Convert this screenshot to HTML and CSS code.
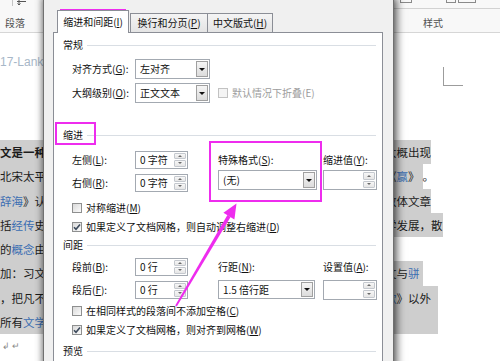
FILE: index.html
```html
<!DOCTYPE html>
<html lang="zh-CN">
<head>
<meta charset="utf-8">
<title>段落</title>
<link rel="stylesheet" href="styles.css">
</head>
<body>
<div class="screen">
  <div class="doc">
    <div class="doc-left">
      <div class="ribbon">
        <div class="rb-top">
          <span class="rb-sep"></span>
          <svg class="rb-icon" width="11" height="6" viewBox="0 0 11 6"><path d="M1 1.5H10M3 0V5M1.5 3.5L3 5L4.5 3.5" fill="none" stroke="#555" stroke-width="1"/></svg>
        </div>
        <div class="rb-label">段落</div>
      </div>
      <div class="page-left">
        <div class="lank">17-Lank</div>
        <div class="hl-block">
          <div class="line bold">文是一种</div>
          <div class="line">北宋太平</div>
          <div class="line"><span class="link">辞海</span>》认</div>
          <div class="line">括<span class="link">经传</span>史</div>
          <div class="line">的<span class="link">概念</span>由</div>
          <div class="line">加：习文</div>
          <div class="line">，把凡不</div>
          <div class="line">所有<span class="link">文学</span></div>
        </div>
        <div class="line para">↲ ↵</div>
      </div>
    </div>
    <div class="doc-mid"></div>
    <div class="doc-right">
      <div class="ribbon">
        <div class="rb-top rb-top-right">
          <span class="frag frag-a"></span>
          <span class="frag frag-b"></span>
          <span class="frag frag-c"></span>
        </div>
        <div class="rb-label rb-label-right">样式</div>
      </div>
      <div class="page-right">
        <div class="mark"></div>
        <div class="rrows">
          <div class="rline"><span class="hl">大概出现</span></div>
          <div class="rline"><span class="hl hl-p3">《<span class="link">赢</span>》</span><span>。</span></div>
          <div class="rline"><span class="hl">散体文章</span></div>
          <div class="rline"><span class="hl">学发展，散</span></div>
          <div class="rline"></div>
          <div class="rline"><span class="hl hl-p3">文与<span class="link">骈</span></span></div>
          <div class="rline"><span class="hl hl-p7"><span class="link">歌</span>》以外</span></div>
          <div class="rline"><span class="hl hl-empty"></span></div>
        </div>
      </div>
    </div>
  </div>

  <div class="dialog">
    <div class="tabs">
      <div class="tab active">缩进和间距(<u>I</u>)</div>
      <div class="tab second">换行和分页(<u>P</u>)</div>
      <div class="tab third">中文版式(<u>H</u>)</div>
    </div>
    <div class="panel">
      <div class="heading"><span>常规</span><span class="rule"></span></div>
      <div class="grid grid-general">
        <span class="lbl">对齐方式(<u>G</u>):</span>
        <div class="select sel-short"><span class="val">左对齐</span><span class="dd"><i></i></span></div>
        <span class="span2"></span>
        <span class="lbl">大纲级别(<u>O</u>):</span>
        <div class="select sel-short"><span class="val">正文文本</span><span class="dd"><i></i></span></div>
        <span class="check-line disabled span2"><span class="cb"></span>默认情况下折叠(E)</span>
      </div>

      <div class="heading heading-indent"><span>缩进</span><span class="rule"></span></div>
      <div class="grid grid-indent">
        <span class="lbl">左侧(<u>L</u>):</span>
        <div class="spin"><span class="val">0 字符</span><span class="spbtns"><b class="up"></b><b class="down"></b></span></div>
        <span class="lbl">特殊格式(<u>S</u>):</span>
        <span class="lbl">缩进值(<u>Y</u>):</span>
        <span class="lbl">右侧(<u>R</u>):</span>
        <div class="spin"><span class="val">0 字符</span><span class="spbtns"><b class="up"></b><b class="down"></b></span></div>
        <div class="select sel-wide raise"><span class="val">(无)</span><span class="dd"><i></i></span></div>
        <div class="spin spin-empty raise"><span class="val"></span><span class="spbtns"><b class="up"></b><b class="down"></b></span></div>
      </div>
      <div class="check-line row19"><span class="cb"></span>对称缩进(<u>M</u>)</div>
      <div class="check-line row19"><span class="cb checked"><svg width="8" height="8" viewBox="0 0 8 8"><path d="M1 4.2L3 6.3L7 1.5" fill="none" stroke="#3c4a5c" stroke-width="1.6"/></svg></span>如果定义了文档网格，则自动调整右缩进(<u>D</u>)</div>

      <div class="heading heading-spacing"><span>间距</span><span class="rule"></span></div>
      <div class="grid grid-spacing">
        <span class="lbl">段前(<u>B</u>):</span>
        <div class="spin"><span class="val">0 行</span><span class="spbtns"><b class="up"></b><b class="down"></b></span></div>
        <span class="lbl">行距(<u>N</u>):</span>
        <span class="lbl">设置值(<u>A</u>):</span>
        <span class="lbl">段后(<u>F</u>):</span>
        <div class="spin"><span class="val">0 行</span><span class="spbtns"><b class="up"></b><b class="down"></b></span></div>
        <div class="select sel-mid"><span class="val">1.5 倍行距</span><span class="dd"><i></i></span></div>
        <div class="spin spin-empty"><span class="val"></span><span class="spbtns"><b class="up"></b><b class="down"></b></span></div>
      </div>
      <div class="check-line row19"><span class="cb"></span>在相同样式的段落间不添加空格(<u>C</u>)</div>
      <div class="check-line row19"><span class="cb checked"><svg width="8" height="8" viewBox="0 0 8 8"><path d="M1 4.2L3 6.3L7 1.5" fill="none" stroke="#3c4a5c" stroke-width="1.6"/></svg></span>如果定义了文档网格，则对齐到网格(<u>W</u>)</div>

      <div class="heading heading-preview"><span>预览</span><span class="rule"></span></div>
    </div>
  </div>

  <div class="hbox hbox-tab"></div>
  <div class="hbox hbox-indent"></div>
  <div class="hbox hbox-special"></div>
  <svg class="arrow" width="500" height="361" viewBox="0 0 500 361">
    <polygon points="175.2,305.6 176.8,306.4 230.6,216.9 227.4,215.1" fill="#ee2cee"/>
    <polygon points="236.5,203.5 234.4,219.5 223.4,212.8" fill="#ee2cee"/>
  </svg>
</div>
</body>
</html>
```

FILE: styles.css
```css
* { box-sizing: border-box; }
html, body { margin: 0; padding: 0; }
body {
  width: 500px;
  height: 361px;
  overflow: hidden;
  background: #fff;
  font-family: "Noto Sans CJK SC", "Noto Sans", sans-serif;
}
u { text-decoration: underline; text-underline-offset: 1px; }

.screen {
  position: relative;
  width: 500px;
  height: 361px;
  overflow: hidden;
  background: #fff;
}

/* ---------- background document ---------- */
.doc { display: flex; height: 361px; }
.doc-left { width: 43px; flex: none; display: flex; flex-direction: column; }
.doc-mid { flex: 1; }
.doc-right { width: 115px; flex: none; display: flex; flex-direction: column; }

.ribbon {
  height: 33px;
  flex: none;
  background: #f8f8f8;
  border-bottom: 1px solid #d6d6d6;
}
.rb-top { height: 8px; display: flex; align-items: flex-start; }
.rb-sep { width: 1px; height: 6px; margin-left: 12px; background: #c4c4c4; }
.rb-icon { margin-left: 3px; }
.rb-label {
  margin-top: 8px;
  padding-left: 5px;
  font-size: 10px;
  line-height: 14px;
  color: #505050;
}
.rb-top-right {
  height: 9px;
  border-bottom: 1px solid #d2d2d2;
  align-items: flex-start;
}
.frag {
  height: 3px;
  border-bottom: 1px solid #8a8a8a;
  border-left: 1px solid #8a8a8a;
  border-right: 1px solid #8a8a8a;
}
.frag-a { width: 12px; margin-left: 15px; }
.frag-b { width: 10px; margin-left: 34px; }
.frag-c { width: 18px; margin-left: 2px; }
.rb-label-right { padding-left: 38px; margin-top: 7px; }

.page-left { display: flex; flex-direction: column; }
.lank {
  margin-top: 22px;
  font-family: "Liberation Sans", sans-serif;
  font-size: 12px;
  line-height: 14px;
  color: #a7b7c8;
  white-space: nowrap;
}
.hl-block { margin-top: 71px; background: #cecece; }
.line {
  height: 24.3px;
  line-height: 24.3px;
  font-size: 11.5px;
  color: #1c1c1c;
  white-space: nowrap;
}
.bold { font-weight: bold; }
.link { color: #3a6db2; }
.para { font-size: 9px; color: #8a8a8a; padding-left: 2px; }

.page-right { display: flex; flex-direction: column; }
.mark {
  margin-top: 34px;
  margin-left: 58px;
  width: 20px;
  height: 19px;
  border-left: 1px solid #9c9c9c;
  border-bottom: 1px solid #9c9c9c;
}
.rrows { margin-top: 54px; }
.rline {
  height: 24.3px;
  line-height: 24.3px;
  font-size: 11.5px;
  color: #1c1c1c;
  white-space: nowrap;
  display: flex;
}
.hl { background: #cecece; height: 100%; }
.hl-p3 { padding-right: 3px; }
.hl-p7 { padding-right: 7px; }
.hl-empty { width: 53px; }

/* ---------- dialog ---------- */
.dialog {
  position: absolute;
  left: 43px;
  top: -3px;
  width: 351px;
  height: 380px;
  border: 1px solid #707070;
  background: #f0f0f0;
  padding: 12px 10px 0 9px;
  box-shadow: 3px 1px 8px rgba(0, 0, 0, 0.6), -2px 0 6px rgba(0, 0, 0, 0.3);
  display: flex;
  flex-direction: column;
  font-size: 10px;
  color: #111;
}
.tabs {
  display: flex;
  align-items: flex-end;
  height: 23px;
  margin-left: 4px;
  margin-bottom: -1px;
  position: relative;
  z-index: 2;
}
.tab {
  border: 1px solid #8b8e96;
  border-bottom: none;
  text-align: center;
  font-size: 10px;
  white-space: nowrap;
}
.tab.active {
  width: 72px;
  height: 23px;
  line-height: 22px;
  background: #fff;
}
.tab.second, .tab.third {
  height: 19px;
  line-height: 18px;
  margin-bottom: 1px;
  background: linear-gradient(#f4f4f4, #e4e4e4);
}
.tab.second { width: 78px; margin-left: 1px; }
.tab.third { width: 66px; margin-left: -1px; }

.panel {
  flex: 1;
  background: #fff;
  border: 1px solid #8b8e96;
  padding: 5px 6px 0 9px;
}
.heading {
  display: flex;
  align-items: center;
  height: 14px;
  line-height: 14px;
  gap: 4px;
  white-space: nowrap;
}
.heading .rule { flex: 1; border-top: 1px solid #d9dee4; }
.heading-indent { margin-top: 23px; }
.heading-spacing { margin-top: 2px; }
.heading-preview { margin-top: 5px; }

.grid {
  display: grid;
  grid-template-columns: 63px 83px 105px 54px;
  align-items: center;
  margin-left: 9px;
  white-space: nowrap;
}
.grid-general { grid-auto-rows: 24px; margin-top: 5px; }
.grid-indent { grid-auto-rows: 23px; margin-top: 6px; }
.grid-spacing { grid-auto-rows: 23px; margin-top: 3px; }
.span2 { grid-column: span 2; }
.raise { align-self: start; margin-top: -1px; }

.lbl { line-height: 14px; }

.select {
  display: flex;
  align-items: stretch;
  height: 20px;
  border: 1px solid #a3a9b1;
  background: #fff;
}
.sel-short { width: 75px; }
.sel-wide { width: 99px; }
.sel-mid { width: 97px; height: 19px; }
.select .val { flex: 1; padding-left: 4px; line-height: 18px; }
.sel-mid .val { line-height: 17px; }
.dd {
  width: 12px;
  margin: 1px;
  border: 1px solid #a0a0a0;
  background: linear-gradient(#f5f5f5, #dcdcdc);
  display: flex;
  align-items: center;
  justify-content: center;
}
.dd i {
  width: 0;
  height: 0;
  border-left: 3px solid transparent;
  border-right: 3px solid transparent;
  border-top: 3px solid #111;
}

.spin {
  display: flex;
  width: 53px;
  height: 18px;
  border: 1px solid #a3a9b1;
  background: #fff;
}
.spin-empty { width: 54px; height: 20px; }
.spin .val { flex: 1; padding-left: 4px; line-height: 16px; }
.spbtns {
  width: 13px;
  display: flex;
  flex-direction: column;
  gap: 1px;
  padding: 1px 1px 1px 0;
}
.spbtns b {
  flex: 1;
  border: 1px solid #c4c8ce;
  border-radius: 1px;
  background: linear-gradient(#f7f7f7, #e6e6e6);
  display: flex;
  align-items: center;
  justify-content: center;
}
.spbtns b::after {
  content: "";
  width: 0;
  height: 0;
  border-left: 2px solid transparent;
  border-right: 2px solid transparent;
}
.spbtns b.up::after { border-bottom: 2px solid #6a6a6a; }
.spbtns b.down::after { border-top: 2px solid #6a6a6a; }

.check-line {
  display: flex;
  align-items: center;
  white-space: nowrap;
  line-height: 14px;
}
.row19 { height: 19px; margin-left: 9px; }
.grid-indent + .row19 { margin-top: 4px; }
.cb {
  width: 10px;
  height: 10px;
  flex: none;
  margin-right: 4px;
  border: 1px solid #8e8f8f;
  background: linear-gradient(135deg, #d9d9d9, #fbfbfb);
  display: flex;
  align-items: center;
  justify-content: center;
}
.disabled { color: #9c9c9c; }
.disabled .cb { border-color: #c2c2c2; background: #f4f4f4; }

/* ---------- annotations ---------- */
.hbox {
  position: absolute;
  border: 2px solid #ee2cee;
}
.hbox-tab { left: 60px; top: 9px; width: 66px; height: 23px; }
.hbox-indent { left: 55px; top: 122px; width: 41px; height: 23px; }
.hbox-special { left: 209px; top: 141px; width: 113px; height: 61px; }
.arrow { position: absolute; left: 0; top: 0; pointer-events: none; }
```
